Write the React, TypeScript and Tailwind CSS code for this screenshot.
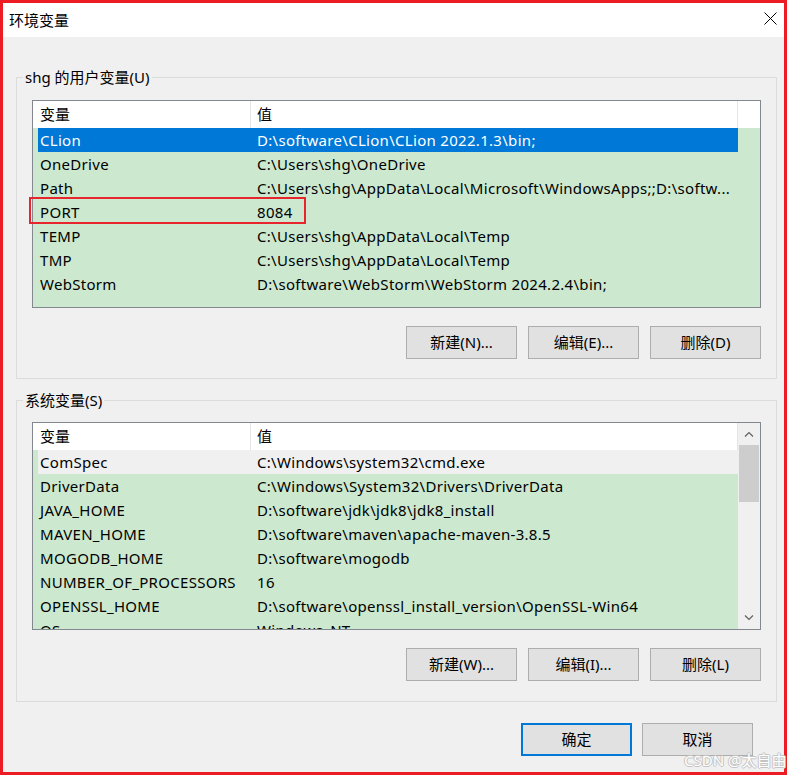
import React from "react";

type Row = { name: string; value: string; state?: "sel" | "gray" };

const userRows: Row[] = [
  { name: "CLion", value: "D:\\software\\CLion\\CLion 2022.1.3\\bin;", state: "sel" },
  { name: "OneDrive", value: "C:\\Users\\shg\\OneDrive" },
  { name: "Path", value: "C:\\Users\\shg\\AppData\\Local\\Microsoft\\WindowsApps;;D:\\softw..." },
  { name: "PORT", value: "8084" },
  { name: "TEMP", value: "C:\\Users\\shg\\AppData\\Local\\Temp" },
  { name: "TMP", value: "C:\\Users\\shg\\AppData\\Local\\Temp" },
  { name: "WebStorm", value: "D:\\software\\WebStorm\\WebStorm 2024.2.4\\bin;" },
];

const sysRows: Row[] = [
  { name: "ComSpec", value: "C:\\Windows\\system32\\cmd.exe", state: "gray" },
  { name: "DriverData", value: "C:\\Windows\\System32\\Drivers\\DriverData" },
  { name: "JAVA_HOME", value: "D:\\software\\jdk\\jdk8\\jdk8_install" },
  { name: "MAVEN_HOME", value: "D:\\software\\maven\\apache-maven-3.8.5" },
  { name: "MOGODB_HOME", value: "D:\\software\\mogodb" },
  { name: "NUMBER_OF_PROCESSORS", value: "16" },
  { name: "OPENSSL_HOME", value: "D:\\software\\openssl_install_version\\OpenSSL-Win64" },
  { name: "OS", value: "Windows_NT" },
];

function Btn({ children, primary }: { children: React.ReactNode; primary?: boolean }) {
  return (
    <div
      className={
        primary
          ? "w-[111px] h-[33px] bg-[#e1e1e1] border-2 border-[#0078d7] flex items-center justify-center text-[15px] text-black"
          : "w-[111px] h-[33px] bg-[#e1e1e1] border border-[#adadad] flex items-center justify-center text-[15px] text-black"
      }
    >
      {children}
    </div>
  );
}

function RowView({ r }: { r: Row }) {
  const cls =
    r.state === "sel"
      ? "bg-[#0078d7] text-white"
      : r.state === "gray"
      ? "bg-[#f0f0f0] text-black"
      : "text-black";
  return (
    <div
      className={
        "ml-[5px] w-[700px] h-[24px] shrink-0 flex items-center text-[15px] tracking-[0.3px] whitespace-nowrap " +
        cls
      }
    >
      <span className="w-[219px] pl-[2px] overflow-hidden">{r.name}</span>
      <span className="flex-1 overflow-hidden">{r.value}</span>
    </div>
  );
}

function Header({ full }: { full: boolean }) {
  return (
    <div className={"h-[27px] shrink-0 bg-white flex text-[15px] text-black " + (full ? "w-full" : "w-[705px]")}>
      <div className="w-[218px] h-full border-r border-[#e5e5e5] flex items-center pl-[7px]">变量</div>
      <div className="w-[487px] h-full border-r border-[#e5e5e5] flex items-center pl-[6px]">值</div>
    </div>
  );
}

function Chevron({ up }: { up?: boolean }) {
  return (
    <svg width="10" height="6" viewBox="0 0 10 6" fill="none">
      <path
        d={up ? "M1 5.5 L5 1.5 L9 5.5" : "M1 0.5 L5 4.5 L9 0.5"}
        stroke="#606060"
        strokeWidth="1.2"
      />
    </svg>
  );
}

function Group({
  label,
  children,
  pt,
  pb,
}: {
  label: string;
  children: React.ReactNode;
  pt: string;
  pb: string;
}) {
  return (
    <div className={"relative w-[761px] h-[302px] border border-[#dcdcdc] px-[15px] " + pt + " " + pb + " flex flex-col"}>
      <div className="absolute left-[6px] top-[-11px] px-[2px] bg-[#f0f0f0] text-[15px] leading-[20px] text-black">
        {label}
      </div>
      {children}
    </div>
  );
}

export default function App() {
  return (
    <div className="w-[789px] h-[775px] bg-white font-['Noto_Sans','Noto_Sans_CJK_SC',sans-serif] relative overflow-hidden">
      <div className="w-[787px] h-[775px] border-[3px] border-[#ed1c24] flex flex-col">
        {/* title bar */}
        <div className="h-[34px] shrink-0 bg-white flex items-start justify-between pl-[6px] pr-[7px]">
          <span className="text-[15px] leading-[20px] mt-[7px] text-black">环境变量</span>
          <svg className="mt-[9px]" width="13" height="13" viewBox="0 0 13 13">
            <path d="M0.5 0.5 L12.5 12.5 M12.5 0.5 L0.5 12.5" stroke="#000" strokeWidth="1" />
          </svg>
        </div>

        {/* body */}
        <div className="flex-1 bg-[#f0f0f0] pl-[13px] pr-[7px] pt-[40px] flex flex-col">
          <Group label="shg 的用户变量(U)" pt="pt-[22px]" pb="pb-[19px]">
            <div className="w-[729px] h-[208px] border border-[#828790] bg-[#cce8cf] flex flex-col overflow-hidden">
              <Header full />
              {userRows.map((r) => (
                <RowView key={r.name} r={r} />
              ))}
            </div>
            <div className="mt-[18px] flex justify-end gap-[11px]">
              <Btn>新建(N)...</Btn>
              <Btn>编辑(E)...</Btn>
              <Btn>删除(D)</Btn>
            </div>
            {/* annotation box around PORT */}
            <div className="absolute left-[12px] top-[119px] w-[277px] h-[27px] border-2 border-[#e8242c]" />
          </Group>

          <div className="mt-[21px]">
            <Group label="系统变量(S)" pt="pt-[21px]" pb="pb-[20px]">
              <div className="w-[729px] h-[208px] border border-[#828790] bg-[#cce8cf] flex overflow-hidden">
                <div className="w-[705px] flex flex-col overflow-hidden">
                  <Header full={false} />
                  {sysRows.map((r) => (
                    <RowView key={r.name} r={r} />
                  ))}
                </div>
                <div className="flex-1 bg-[#f0f0f0] flex flex-col">
                  <div className="h-[22px] flex items-center justify-center">
                    <Chevron up />
                  </div>
                  <div className="h-[57px] mx-[1px] bg-[#cdcdcd]" />
                  <div className="flex-1" />
                  <div className="h-[22px] flex items-center justify-center">
                    <Chevron />
                  </div>
                </div>
              </div>
              <div className="mt-[18px] flex justify-end gap-[11px]">
                <Btn>新建(W)...</Btn>
                <Btn>编辑(I)...</Btn>
                <Btn>删除(L)</Btn>
              </div>
            </Group>
          </div>

          <div className="mt-[21px] w-[761px] flex justify-end gap-[10px] pr-[24px]">
            <Btn primary>确定</Btn>
            <Btn>取消</Btn>
          </div>
        </div>
      </div>

      <div className="absolute left-[684px] top-[751px] whitespace-nowrap text-[15px] leading-[18px] text-white [text-shadow:1px_0_0_#c4c4c4,-1px_0_0_#c4c4c4,0_1px_0_#c4c4c4,0_-1px_0_#c4c4c4]">
        CSDN @太自由
      </div>
    </div>
  );
}
